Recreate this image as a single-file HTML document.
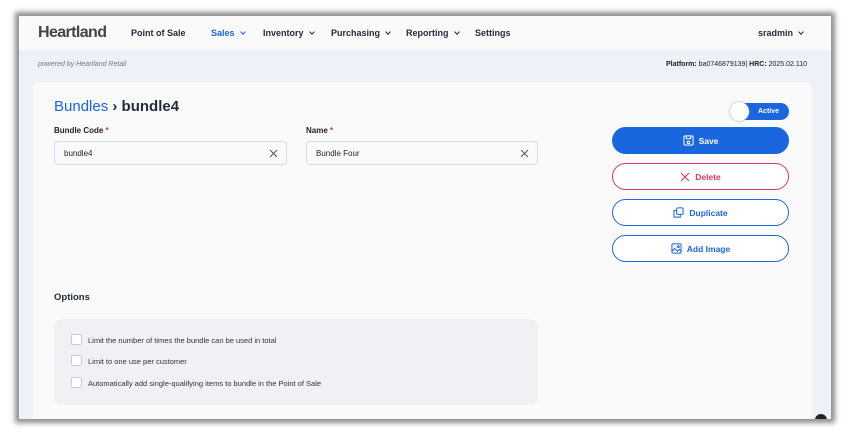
<!DOCTYPE html>
<html><head><meta charset="utf-8"><style>
*{box-sizing:border-box;margin:0;padding:0}
body{width:850px;height:434px;background:#fff;font-family:"Liberation Sans",sans-serif;position:relative;overflow:hidden}
.win{position:absolute;left:19px;top:16px;width:812px;height:403px;background:#eef1f8;box-shadow:0 0 5px 4px #8f8f8f;overflow:hidden}
.nav{height:34px;background:#fafafa;position:relative;font-size:9px;font-weight:bold;color:#1f2a3a}
.nav span{position:absolute;top:12px}
.logo{font-size:16px!important;top:8px!important;color:#444;letter-spacing:-0.6px;font-weight:bold}
.chev{display:inline-block;width:4px;height:4px;border-right:1.2px solid currentColor;border-bottom:1.2px solid currentColor;transform:rotate(45deg);margin-left:6px;position:relative;top:-2px}
.sub{position:absolute;top:45px;font-size:7px;color:#666}
.card{position:absolute;left:14px;top:66px;width:779px;height:360px;background:#fafafa;border-radius:6px}
.lbl{position:absolute;font-size:8px;font-weight:bold;color:#222}
.lbl b{color:#d0304a}
.inp{position:absolute;height:24px;border:1px solid #d8dde6;border-radius:4px;background:#fafafa;font-size:8px;color:#222;padding:7px 9px}
.x{position:absolute;right:8px;top:7px}
.btn{position:absolute;left:579px;width:177px;height:27px;border-radius:14px;font-size:8.5px;font-weight:bold;display:flex;align-items:center;justify-content:center;gap:5px}
.ob{border:1.3px solid #1a66de;color:#1a66de;background:#fff}
.opt{position:absolute;left:21px;width:484px;height:86px;background:#eff1f5;border-radius:8px}
.cb{position:absolute;left:17px;width:11px;height:11px;border:1px solid #c8ccd4;border-radius:2px;background:#fff}
.ct{position:absolute;left:34px;font-size:7.5px;color:#333}
</style></head><body>
<div class="win">
 <div class="nav">
  <span class="logo" style="left:19px">Heartland</span>
  <span style="left:112px">Point of Sale</span>
  <span style="left:192px;color:#1a66de">Sales<i class="chev"></i></span>
  <span style="left:244px">Inventory<i class="chev"></i></span>
  <span style="left:312px">Purchasing<i class="chev"></i></span>
  <span style="left:387px">Reporting<i class="chev"></i></span>
  <span style="left:456px">Settings</span>
  <span style="left:739px">sradmin<i class="chev"></i></span>
 </div>
 <div class="sub" style="left:19px;font-style:italic;color:#777">powered by Heartland Retail</div>
 <div class="sub" style="left:647px;color:#222"><b>Platform:</b> ba0746879139| <b>HRC:</b> 2025.02.110</div>
 <div class="card">
  <div style="position:absolute;left:21px;top:16px;font-size:15px;font-weight:bold;color:#1f2a3a"><span style="color:#1a66de;font-weight:normal">Bundles</span> › bundle4</div>
  <div class="lbl" style="left:21px;top:44px">Bundle Code <b>*</b></div>
  <div class="inp" style="left:21px;top:59px;width:233px">bundle4<svg class="x" width="9" height="9" viewBox="0 0 9 9" stroke="#555" stroke-width="1"><path d="M1 1l7 7M8 1L1 8"/></svg></div>
  <div class="lbl" style="left:273px;top:44px">Name <b>*</b></div>
  <div class="inp" style="left:273px;top:59px;width:232px">Bundle Four<svg class="x" width="9" height="9" viewBox="0 0 9 9" stroke="#555" stroke-width="1"><path d="M1 1l7 7M8 1L1 8"/></svg></div>
  <div style="position:absolute;left:697px;top:21px;width:59px;height:17px;border-radius:9px;background:#1a66de;color:#fff;font-size:7px;font-weight:bold;padding:5px 0 0 28px">Active</div>
  <div style="position:absolute;left:697px;top:20px;width:19px;height:19px;border-radius:50%;background:#fff;box-shadow:0 0 2px #999"></div>
  <div class="btn" style="top:45px;background:#1a66de;color:#fff"><svg width="11" height="11" viewBox="0 0 12 12" fill="none" stroke="#fff" stroke-width="1.1"><rect x="1" y="1" width="10" height="10" rx="1.5"/><path d="M3.5 1v3h5V1"/><circle cx="6" cy="8" r="1.4"/></svg>Save</div>
  <div class="btn" style="top:81px;border:1.3px solid #d8395a;color:#d8395a;background:#fff"><svg width="10" height="10" viewBox="0 0 9 9" stroke="#d8395a" stroke-width="1"><path d="M1 1l7 7M8 1L1 8"/></svg>Delete</div>
  <div class="btn ob" style="top:117px"><svg width="11" height="11" viewBox="0 0 12 12" fill="none" stroke="#1a66de" stroke-width="1.1"><rect x="4" y="1" width="7" height="7" rx="1"/><path d="M4 4H1v7h7V8"/></svg>Duplicate</div>
  <div class="btn ob" style="top:153px"><svg width="11" height="11" viewBox="0 0 12 12" fill="none" stroke="#1a66de" stroke-width="1.1"><rect x="1" y="1" width="10" height="10" rx="1"/><path d="M1 9l3-3 3 3 2-2 2 2"/><circle cx="8" cy="4" r="1"/></svg>Add Image</div>
  <div style="position:absolute;left:21px;top:210px;font-size:9.5px;font-weight:bold;color:#1f2a3a">Options</div>
  <div class="opt" style="top:237px">
   <div class="cb" style="top:15px"></div><div class="ct" style="top:17px">Limit the number of times the bundle can be used in total</div>
   <div class="cb" style="top:36px"></div><div class="ct" style="top:38px">Limit to one use per customer</div>
   <div class="cb" style="top:58px"></div><div class="ct" style="top:60px">Automatically add single-qualifying items to bundle in the Point of Sale</div>
  </div>
 </div>
 <div style="position:absolute;left:796px;top:398px;width:12px;height:12px;border-radius:50%;background:#222"></div>
</div>
</body></html>
